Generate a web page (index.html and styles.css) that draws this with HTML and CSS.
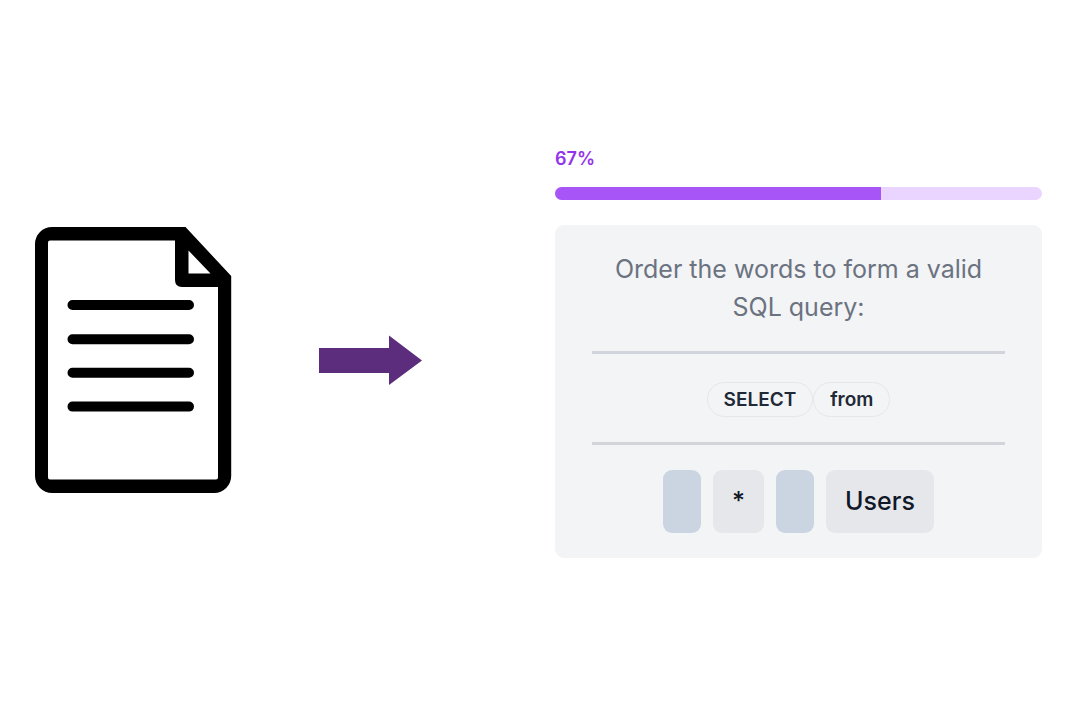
FILE: index.html
```html
<!DOCTYPE html>
<html lang="en">
<head>
<meta charset="utf-8">
<meta name="viewport" content="width=device-width, initial-scale=1">
<title>SQL word order quiz</title>
<link rel="stylesheet" href="styles.css">
</head>
<body>
<main class="scene">
  <svg class="document" viewBox="0 0 197 266" role="img" aria-label="Document">
    <path fill-rule="evenodd" d="M17 0H150.500L196.200 49V249A17 17 0 0 1 179.200 266H17A17 17 0 0 1 0 249V17A17 17 0 0 1 17 0ZM15 13.500Q13 13.500 13 15.500V250.500Q13 252.500 15 252.500H181Q183 252.500 183 250.500V60H147Q140 60 140 53V13.500ZM153.500 23.500V46.500H175.500Z"/>
    <path class="document-lines" d="M37.500 78H154M37.500 112.300H154M37.500 145.800H154M37.500 179.600H154"/>
  </svg>
  <svg class="arrow" viewBox="0 0 103 50" role="img" aria-label="becomes">
    <path d="M0 13H70V0.500L103 25.500L70 50V38H0Z"/>
  </svg>
  <section class="quiz">
    <label class="quiz-percent" for="quiz-progress">67%</label>
    <progress class="quiz-progress" id="quiz-progress" value="67" max="100"></progress>
    <div class="card">
      <p class="question">Order the words to form a valid SQL query:</p>
      <hr class="rule">
      <div class="answer">
        <button class="pill" type="button">SELECT</button>
        <button class="pill" type="button">from</button>
      </div>
      <hr class="rule">
      <div class="words">
        <button class="word word-used" type="button" aria-label="Used word" disabled></button>
        <button class="word" type="button">*</button>
        <button class="word word-used" type="button" aria-label="Used word" disabled></button>
        <button class="word" type="button">Users</button>
      </div>
    </div>
  </section>
</main>
</body>
</html>
```
FILE: styles.css
```css
* {
  box-sizing: border-box;
}

body {
  margin: 0;
  background: #fff;
  color: #111827;
  font-family: Inter, "Liberation Sans", sans-serif;
}

.scene {
  display: grid;
  grid-template-columns: 284fr 236fr 487fr;
  align-items: center;
  min-height: 100vh;
  padding: 0 38px 0 35px;
}

.document {
  width: 197px;
}

.document-lines {
  fill: none;
  stroke: #000;
  stroke-width: 10;
  stroke-linecap: round;
}

.arrow {
  width: 103px;
  fill: #5c2d7c;
}

.quiz {
  display: flex;
  flex-direction: column;
  padding-bottom: 16px;
}

.quiz-percent {
  color: #9333ea;
  font-size: 18px;
  font-weight: 600;
  line-height: 24px;
}

.quiz-progress {
  appearance: none;
  display: block;
  width: 100%;
  height: 13px;
  margin: 16px 0 25px;
  border: 0;
  border-radius: 7px;
  overflow: hidden;
  background: #e9d5ff;
}

.quiz-progress::-webkit-progress-bar {
  background: #e9d5ff;
}

.quiz-progress::-webkit-progress-value {
  background: #a855f7;
}

.card {
  padding: 25px 37px;
  border-radius: 9px;
  background: #f3f4f6;
}

.question {
  margin: 0;
  color: #6b7280;
  font-size: 25px;
  line-height: 38px;
  text-align: center;
}

.rule {
  height: 3px;
  margin: 25px 0;
  border: 0;
  background: #d1d5db;
}

.answer {
  display: flex;
  justify-content: center;
  padding-top: 3px;
}

.pill {
  padding: 4px 16px;
  border: 1px solid #e5e7eb;
  border-radius: 18px;
  background: #f3f4f6;
  color: #1f2937;
  font: 600 19px/25px Inter, "Liberation Sans", sans-serif;
}

.words {
  display: flex;
  justify-content: center;
  gap: 12px;
}

.word {
  padding: 12px 19px;
  border: 0;
  border-radius: 9px;
  background: #e5e7eb;
  color: #111827;
  font: 500 25px/39px Inter, "Liberation Sans", sans-serif;
}

.word-used {
  background: #cbd5e1;
}
```
